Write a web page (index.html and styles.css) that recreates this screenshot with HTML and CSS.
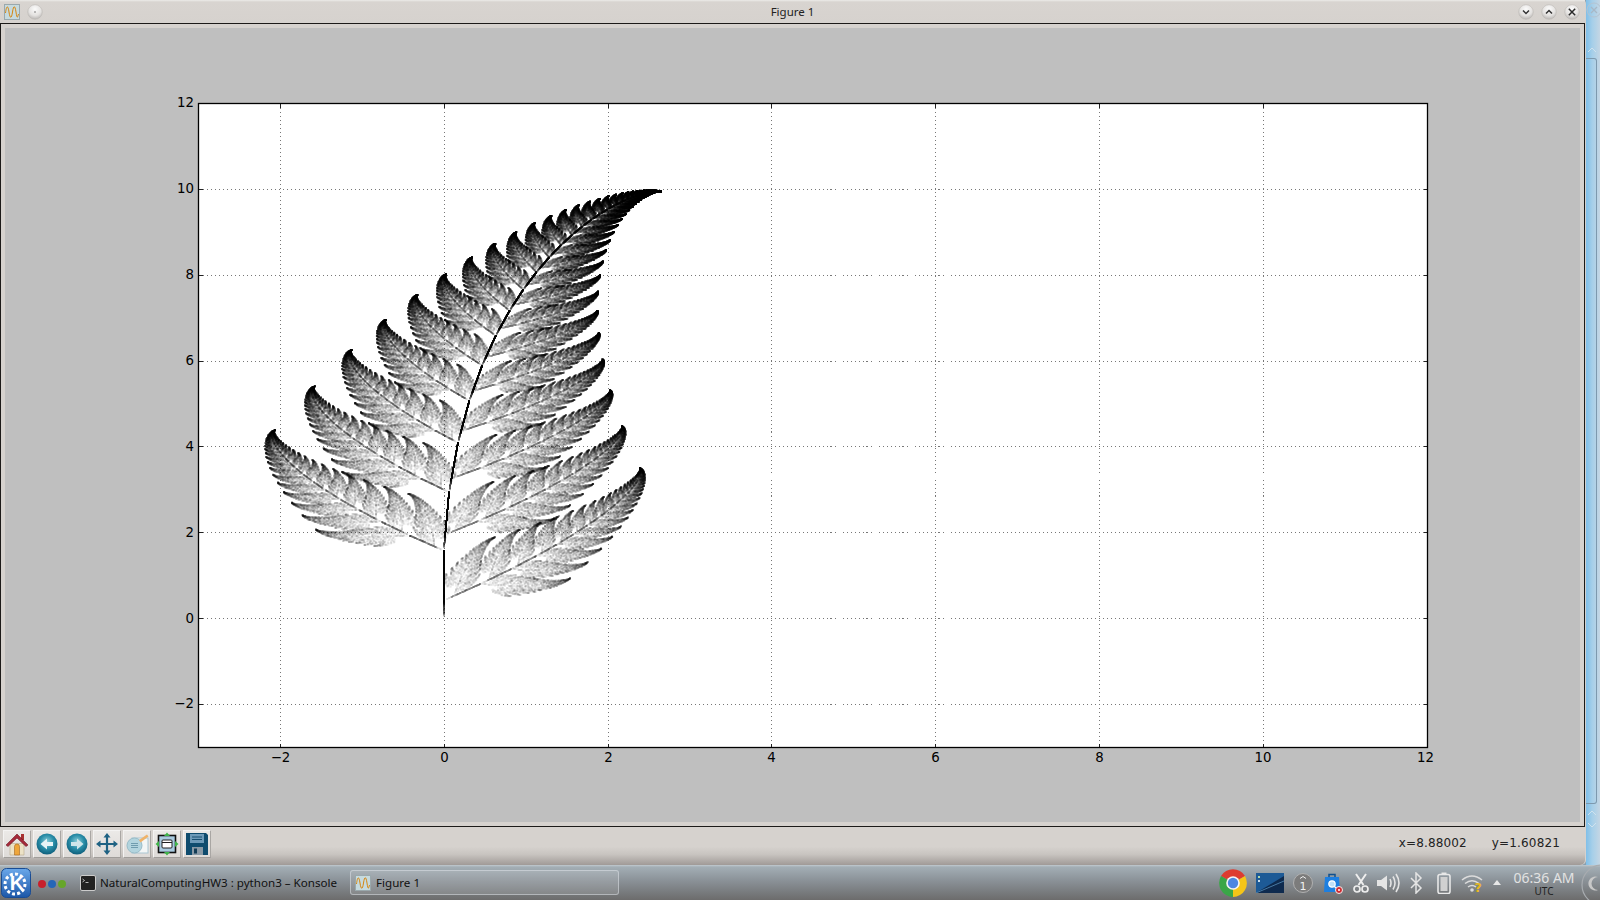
FILE: index.html
```html
<!DOCTYPE html>
<html lang="en">
<head>
<meta charset="utf-8">
<title>Figure 1</title>
<link rel="stylesheet" href="styles.css">
</head>
<body>
<svg class="defs" width="0" height="0" aria-hidden="true">
  <defs>
    <symbol id="figicon" viewBox="0 0 16 16">
      <rect x=".5" y=".5" width="15" height="15" fill="#c6dade" stroke="#9aa8ac"/>
      <path d="M1.5 9C2.500 1 4 1 5 8s2.500 7 3.500 0 2.500-7 3.500 0 1.500 6 2.500 2" fill="none" stroke="#d6860f" stroke-width="1"/>
    </symbol>
    <radialGradient id="knob" cx=".5" cy=".3" r=".8">
      <stop offset="0" stop-color="#fbfbfb"/><stop offset=".55" stop-color="#e4e2e0"/><stop offset="1" stop-color="#a9a6a4"/>
    </radialGradient>
    <radialGradient id="ball" cx=".5" cy=".4" r=".6">
      <stop offset="0" stop-color="#8fd2dc"/><stop offset=".55" stop-color="#2a8ea8"/><stop offset="1" stop-color="#0f5f7c"/>
    </radialGradient>
    <linearGradient id="kblue" x1="0" y1="0" x2="0" y2="1">
      <stop offset="0" stop-color="#6aa8ea"/><stop offset="1" stop-color="#1c57a8"/>
    </linearGradient>
  </defs>
</svg>
<div class="desktop">
  <div class="window">
    <header class="titlebar">
      <div class="title-left">
        <svg class="ico16"><use href="#figicon"/></svg>
        <svg class="knob" viewBox="0 0 16 16"><circle cx="8" cy="8" r="7.300" fill="url(#knob)" stroke="#bcb9b6" stroke-width=".6"/><circle cx="8" cy="8" r=".7" fill="#555"/></svg>
      </div>
      <div class="title-text">Figure 1</div>
      <div class="title-right">
        <svg class="knob" viewBox="0 0 16 16"><circle cx="8" cy="8" r="7.300" fill="url(#knob)" stroke="#bcb9b6" stroke-width=".6"/><path d="M5 6.500l3 3 3-3" fill="none" stroke="#333" stroke-width="1.500"/></svg>
        <svg class="knob" viewBox="0 0 16 16"><circle cx="8" cy="8" r="7.300" fill="url(#knob)" stroke="#bcb9b6" stroke-width=".6"/><path d="M5 9.500l3-3 3 3" fill="none" stroke="#333" stroke-width="1.500"/></svg>
        <svg class="knob" viewBox="0 0 16 16"><circle cx="8" cy="8" r="7.300" fill="url(#knob)" stroke="#bcb9b6" stroke-width=".6"/><path d="M4.800 4.800l6.400 6.400M11.200 4.800l-6.400 6.400" fill="none" stroke="#2a2a2a" stroke-width="1.500"/></svg>
      </div>
    </header>
    <main class="frame">
      <div class="figure">
        <svg class="chart" viewBox="5 28 1575 794" font-family="'DejaVu Sans', sans-serif" font-size="13.33" fill="#000">
          <rect x="198.500" y="103.500" width="1229" height="644" fill="#fff"/>
          <g class="grid">
            <path d="M280.500 103.500V747.500M444.500 103.500V747.500M608.500 103.500V747.500M771.500 103.500V747.500M935.500 103.500V747.500M1099.500 103.500V747.500M1263.500 103.500V747.500"/>
            <path d="M198.500 189.500H1427.500M198.500 275.500H1427.500M198.500 361.500H1427.500M198.500 446.500H1427.500M198.500 532.500H1427.500M198.500 618.500H1427.500M198.500 704.500H1427.500"/>
          </g>
          <path class="ticks" d="M280.500 103.500v4M444.500 103.500v4M608.500 103.500v4M771.500 103.500v4M935.500 103.500v4M1099.500 103.500v4M1263.500 103.500v4M280.500 747.500v-4M444.500 747.500v-4M608.500 747.500v-4M771.500 747.500v-4M935.500 747.500v-4M1099.500 747.500v-4M1263.500 747.500v-4M198.500 189.500h4M198.500 275.500h4M198.500 361.500h4M198.500 446.500h4M198.500 532.500h4M198.500 618.500h4M198.500 704.500h4M1427.500 189.500h-4M1427.500 275.500h-4M1427.500 361.500h-4M1427.500 446.500h-4M1427.500 532.500h-4M1427.500 618.500h-4M1427.500 704.500h-4"/>
          <rect class="spine" x="198.500" y="103.500" width="1229" height="644"/>
          <g text-anchor="end">
            <text x="194" y="107">12</text>
            <text x="194" y="193">10</text>
            <text x="194" y="279">8</text>
            <text x="194" y="365">6</text>
            <text x="194" y="450.500">4</text>
            <text x="194" y="536.500">2</text>
            <text x="194" y="622.500">0</text>
            <text x="194" y="708">−2</text>
          </g>
          <g text-anchor="middle">
            <text x="280.500" y="762">−2</text>
            <text x="444.500" y="762">0</text>
            <text x="608.500" y="762">2</text>
            <text x="771.500" y="762">4</text>
            <text x="935.500" y="762">6</text>
            <text x="1099.500" y="762">8</text>
            <text x="1263" y="762">10</text>
            <text x="1425.500" y="762">12</text>
          </g>
        </svg>
        <canvas id="fern" class="fern" width="1229" height="644"></canvas>
      </div>
    </main>
    <footer class="toolbar">
      <div class="tools">
        <button class="tool" type="button" aria-label="Home"><svg viewBox="0 0 24 24"><path d="M5 11.500h14V23H5z" fill="#ece2c6" stroke="#b9a98a" stroke-width=".6"/><path d="M9.500 14.500a2.500 2.500 0 0 1 5 0V23h-5z" fill="#eea63a" stroke="#a5661c" stroke-width=".6"/><rect x="16" y="2" width="3" height="6" fill="#a83232"/><path d="M1 13 12 2l11 11-2 1.500L12 6l-9 8.500z" fill="#a52a3a" stroke="#701a26" stroke-width=".6"/></svg></button>
        <button class="tool" type="button" aria-label="Back"><svg viewBox="0 0 24 24"><circle cx="12" cy="12" r="10.500" fill="url(#ball)"/><path d="M5.500 12 12 6.500V10h6v4h-6v3.500z" fill="#e8f4f6"/></svg></button>
        <button class="tool" type="button" aria-label="Forward"><svg viewBox="0 0 24 24"><circle cx="12" cy="12" r="10.500" fill="url(#ball)"/><path d="M18.500 12 12 6.500V10H6v4h6v3.500z" fill="#cfe6ea"/></svg></button>
        <button class="tool" type="button" aria-label="Pan"><svg viewBox="0 0 24 24"><path d="M12 1l3.500 4.500h-2.400v5.400h5.400V8.500L23 12l-4.500 3.500v-2.400h-5.400v5.400h2.400L12 23l-3.500-4.500h2.400v-5.400H5.500v2.400L1 12l4.500-3.500v2.400h5.400V5.500H8.500z" fill="#1f6283"/></svg></button>
        <button class="tool" type="button" aria-label="Zoom"><svg viewBox="0 0 24 24"><rect x="7" y="6" width="16" height="15" fill="#f3f6f6" stroke="#a9c6d2"/><circle cx="9.500" cy="13.500" r="7.500" fill="#b2d4de" stroke="#98bcc8"/><path d="M6 11.500h7M6 13.500h7M6 15.500h7" stroke="#6f9cae" stroke-width="1"/><path d="M14 8 22 2.500l1.500 2-8 6z" fill="#efb36a"/></svg></button>
        <button class="tool" type="button" aria-label="Subplots"><svg viewBox="0 0 24 24"><rect x="3.500" y="3.500" width="17" height="17" fill="#a9cbe0" stroke="#111" stroke-width="1.600"/><rect x="7" y="8" width="10" height="8" rx="1" fill="#fff" stroke="#222"/><path d="M7 10.500h10" stroke="#222"/><path d="M12 .5l3 3.500H9zM12 23.500 9 20h6zM.5 12 4 9v6zM23.500 12 20 9v6z" fill="#3fb54a"/></svg></button>
        <button class="tool" type="button" aria-label="Save"><svg viewBox="0 0 24 24"><path d="M1 1h20l2 2v20H1z" fill="#0f4c6e"/><rect x="5" y="2" width="14" height="9" fill="#6d9ab8"/><path d="M7 5h10M7 7.500h10" stroke="#184f70" stroke-width="1.200"/><rect x="7" y="15" width="11" height="8" fill="#8a9aa6"/><rect x="9" y="16.500" width="3" height="5" fill="#123c56"/></svg></button>
      </div>
      <div class="coords"><span>x=8.88002</span><span>y=1.60821</span></div>
    </footer>
  </div>
  <aside class="behind">
    <svg class="behind-x" viewBox="0 0 16 16"><circle cx="8" cy="8" r="7" fill="none" stroke="#b4c4d2"/><path d="M5 5l6 6M11 5l-6 6" stroke="#a8b8c6" stroke-width="1.300"/></svg>
    <svg class="chev chev-top" viewBox="0 0 10 6"><path d="M1 5l4-4 4 4" fill="none" stroke="#cfe2ee" stroke-width="1"/></svg>
    <div class="slider"></div>
    <svg class="chev chev-a" viewBox="0 0 10 6"><path d="M1 5l4-4 4 4" fill="none" stroke="#cfe2ee" stroke-width="1"/></svg>
    <svg class="chev chev-b" viewBox="0 0 10 6"><path d="M1 1l4 4 4-4" fill="none" stroke="#cfe2ee" stroke-width="1"/></svg>
  </aside>
</div>
<nav class="panel">
  <svg class="kmenu" viewBox="0 0 30 30"><rect x=".5" y=".5" width="29" height="29" rx="5" fill="url(#kblue)" stroke="#1a4d94"/><circle cx="14" cy="16" r="10" fill="none" stroke="#fff" stroke-width="3" stroke-dasharray="3 2.200"/><text x="16" y="22" font-family="'Liberation Sans', sans-serif" font-weight="700" font-size="20" fill="#fff" text-anchor="middle">K</text></svg>
  <svg class="dots" viewBox="0 0 30 10"><circle cx="5" cy="5" r="4" fill="#c8202c"/><circle cx="15" cy="5" r="4" fill="#2566b8"/><circle cx="25" cy="5" r="4" fill="#66a62a"/></svg>
  <div class="task task-konsole">
    <svg class="ico16" viewBox="0 0 16 16"><rect x=".5" y=".5" width="15" height="15" rx="1.500" fill="#222" stroke="#ccc"/><path d="M2.500 4l2 1.500-2 1.500M5.500 7.500h3" stroke="#ddd" fill="none" stroke-width=".8"/></svg>
    <span>NaturalComputingHW3 : python3 – Konsole</span>
  </div>
  <div class="task task-figure">
    <svg class="ico16"><use href="#figicon"/></svg>
    <span>Figure 1</span>
  </div>
  <div class="tray">
    <svg class="t-chrome" viewBox="0 0 28 28"><path d="M14 14 2 7a14 14 0 0 1 24 0z" fill="#dd3b30"/><path d="M14 14 26 7a14 14 0 0 1-12 21z" fill="#f5c518"/><path d="M14 14 14 28A14 14 0 0 1 2 7z" fill="#3aa648"/><circle cx="14" cy="14" r="6.800" fill="#f4f4f4"/><circle cx="14" cy="14" r="5.200" fill="#4c86e0"/></svg>
    <svg class="t-desk" viewBox="0 0 28 20"><rect width="28" height="20" fill="#1d5a96"/><path d="M0 20 28 3v17z" fill="#0e2a4e"/><path d="M0 20 28 8" stroke="#6fb0de" stroke-width=".6"/><rect x="2" y="3" width="2" height="2" fill="#b5d8a8"/><rect x="2" y="7" width="2" height="2" fill="#c8dcec"/></svg>
    <svg class="t-one" viewBox="0 0 20 20"><circle cx="10" cy="10" r="9.500" fill="#7c7c7c" stroke="#b0b0b0"/><path d="M7 5.500 10 3.500l3 2" fill="none" stroke="#eee"/><text x="10" y="16.500" font-family="'DejaVu Sans', sans-serif" font-size="11" fill="#f0f0f0" text-anchor="middle">1</text></svg>
    <svg class="t-bag" viewBox="0 0 20 22"><path d="M2 5h14l1 15H1z" fill="#1e7fe0"/><path d="M6 5V2.500h6V5" fill="none" stroke="#10508e" stroke-width="1.500"/><circle cx="9" cy="12" r="3.200" fill="#bfe0f8" stroke="#fff" stroke-width="1.200"/><path d="M11.500 14.500l2 2" stroke="#fff" stroke-width="1.300"/><circle cx="16" cy="18" r="3.500" fill="#d02a30" stroke="#eee"/><circle cx="16" cy="18" r="1" fill="#fff"/></svg>
    <svg class="t-cut" viewBox="0 0 16 20"><path d="M3 1l7.500 11M13 1 5.500 12" stroke="#eee" stroke-width="2"/><circle cx="4" cy="16" r="3" fill="none" stroke="#eee" stroke-width="1.700"/><circle cx="12" cy="16" r="3" fill="none" stroke="#eee" stroke-width="1.700"/></svg>
    <svg class="t-vol" viewBox="0 0 24 20"><path d="M1 7h4l6-4.500v15L5 13H1z" fill="#e4e4e4"/><path d="M14 6q2 4 0 8M17 3.500q4 6.500 0 13M20 1q6 9 0 18" fill="none" stroke="#e4e4e4" stroke-width="1.600"/></svg>
    <svg class="t-bt" viewBox="0 0 14 22"><path d="M2 6l10 10-5 5V1l5 5L2 16" fill="none" stroke="#e4e4e4" stroke-width="1.500"/></svg>
    <svg class="t-bat" viewBox="0 0 14 22"><rect x="1" y="2.500" width="12" height="19" rx="2" fill="none" stroke="#e8e8e8" stroke-width="1.600"/><rect x="4.500" y=".5" width="5" height="2" fill="#e8e8e8"/><rect x="3.500" y="5" width="7" height="14" fill="#d0d0d0"/></svg>
    <svg class="t-wifi" viewBox="0 0 22 20"><path d="M1 7q10-8 20 0M4 10.500q7-5.500 14 0M7 14q4-3 8 0" fill="none" stroke="#dcdcdc" stroke-width="1.500"/><circle cx="11" cy="17" r="1.800" fill="#dcdcdc"/><text x="17" y="19" font-family="'DejaVu Sans', sans-serif" font-weight="700" font-size="13" fill="#e8b820" text-anchor="middle">?</text></svg>
    <svg class="t-up" viewBox="0 0 8 5"><path d="M0 5 4 0l4 5z" fill="#e8e8e8"/></svg>
    <div class="clock"><div class="time">06:36 AM</div><div class="zone">UTC</div></div>
  </div>
  <svg class="cashew" viewBox="0 0 20 44"><circle cx="22" cy="22" r="20" fill="none" stroke="#a8acb0" stroke-width="1.200"/><path d="M18 14a7 7 0 1 0 0 13 6 6 0 0 1 0-13z" fill="#c8c8c8"/></svg>
</nav>
<script src="fern.js"></script>
</body>
</html>
```

FILE: styles.css
```css
* { box-sizing: border-box; }
html, body { margin: 0; height: 100%; }
body {
  width: 1600px;
  height: 900px;
  overflow: hidden;
  display: flex;
  flex-direction: column;
  background: #8ba0ae;
  font-family: "DejaVu Sans", sans-serif;
}
.defs { position: absolute; }
.desktop { display: flex; height: 865px; }

/* window */
.window {
  width: 1586px;
  display: flex;
  flex-direction: column;
  background: #d6d2ce;
  border-radius: 0 4px 5px 0;
  padding-right: 1px;
}
.titlebar {
  height: 23px;
  display: grid;
  grid-template-columns: 1fr auto 1fr;
  align-items: center;
  background: linear-gradient(#ecebe9 0, #d8d4d0 2px, #d6d2ce 100%);
}
.title-left { display: flex; align-items: center; gap: 7px; padding-left: 4px; }
.title-right { display: flex; align-items: center; justify-content: flex-end; gap: 7px; padding-right: 5px; }
.title-text { font: 11.5px "Noto Sans", sans-serif; color: #222; }
.ico16 { width: 16px; height: 16px; flex: none; display: block; }
.knob { width: 16px; height: 16px; display: block; }

.frame {
  height: 804px;
  border: 1px solid #1c1a18;
  padding: 4px;
  background: #d6d2ce;
}
.figure { position: relative; width: 1575px; height: 794px; background: #bfbfbf; }
.chart { display: block; width: 1575px; height: 794px; }
.grid path { fill: none; stroke: #777; stroke-width: 1; stroke-dasharray: 1 3; shape-rendering: crispEdges; }
.ticks { fill: none; stroke: #222; stroke-width: 1; shape-rendering: crispEdges; }
.spine { fill: none; stroke: #000; stroke-width: 1.300; }
.fern { position: absolute; left: 193.500px; top: 75.500px; }

/* toolbar */
.toolbar {
  height: 38px;
  display: flex;
  justify-content: space-between;
  padding: 3px 0 0 3px;
  background: linear-gradient(#d6d2ce 0, #d6d2ce 52%, #c8c4c0 72%, #a09a97 100%);
  border-bottom-right-radius: 5px;
}
.tools { display: flex; gap: 2px; align-items: flex-start; }
.tool {
  width: 28px;
  height: 28px;
  padding: 1px;
  display: flex;
  align-items: center;
  justify-content: center;
  background: linear-gradient(#ebe9e7, #dedbd8);
  border: 1px solid;
  border-color: #f4f3f2 #a9a6a3 #a09d9a #f4f3f2;
}
.tool svg { width: 24px; height: 24px; display: block; }
.coords {
  display: flex;
  gap: 25px;
  padding: 6px 25px 0 0;
  font-size: 12px;
  letter-spacing: .15px;
  color: #222;
}

/* strip of the window behind */
.behind {
  position: relative;
  flex: 1;
  background: linear-gradient(90deg, #80bfe8 0, #a6cfe9 45%, #c4d6e4 100%);
}
.behind-x { position: absolute; left: 0; top: 2px; width: 16px; height: 16px; }
.chev { position: absolute; left: 1px; width: 10px; height: 6px; }
.chev-top { top: 47px; }
.chev-a { top: 810px; }
.chev-b { top: 822px; }
.slider {
  position: absolute;
  left: 0;
  top: 58px;
  width: 11px;
  height: 746px;
  border: 1.500px solid #7d99ae;
  border-left: 0;
  border-radius: 0 3px 3px 0;
}

/* panel */
.panel {
  position: relative;
  height: 35px;
  display: flex;
  align-items: center;
  background: linear-gradient(#c2cad0 0, #a3aeb5 2px, #8a9197 45%, #6c6c6c 100%);
  color: #111;
  font: 11.6px "Noto Sans", sans-serif;
}
.kmenu { width: 30px; height: 30px; margin-left: 1px; flex: none; }
.dots { width: 30px; height: 10px; margin-left: 6px; margin-top: 2px; flex: none; }
.task { display: flex; align-items: center; gap: 4px; height: 25px; white-space: nowrap; }
.task-konsole { width: 270px; margin-left: 13px; }
.task-figure {
  width: 269px;
  gap: 5px;
  padding-left: 4px;
  background: rgba(255, 255, 255, .12);
  border: 1px solid rgba(225, 230, 235, .5);
  border-radius: 3px;
}
.tray { display: flex; align-items: center; margin-left: auto; padding-right: 25px; }
.tray > svg { display: block; flex: none; }
.t-chrome { width: 28px; height: 28px; }
.t-desk { width: 28px; height: 20px; margin-left: 9px; }
.t-one { width: 20px; height: 20px; margin-left: 9px; }
.t-bag { width: 20px; height: 22px; margin-left: 10px; }
.t-cut { width: 16px; height: 20px; margin-left: 10px; }
.t-vol { width: 24px; height: 20px; margin-left: 7px; }
.t-bt { width: 14px; height: 22px; margin-left: 9px; }
.t-bat { width: 14px; height: 22px; margin-left: 14px; }
.t-wifi { width: 22px; height: 20px; margin-left: 10px; }
.t-up { width: 8px; height: 5px; margin-left: 10px; }
.clock { margin-left: 12px; width: 62px; text-align: center; color: #e2e2e2; }
.time { font-size: 14px; line-height: 17px; }
.zone { font-size: 10px; line-height: 11px; color: #222; }
.cashew { position: absolute; right: 0; top: -2px; width: 20px; height: 44px; }
```

FILE: fern.js
```js
(function () {
  var canvas = document.getElementById("fern");
  var w = canvas.width, h = canvas.height;
  var ctx = canvas.getContext("2d");
  var X0 = 442.8 - 198.5, SX = 81.9;
  var Y0 = 618.3 - 103.5, SY = 42.93;
  var N = 500000;
  var ALPHA = 0.03;
  var keep = new Float32Array(w * h).fill(1);

  var seed = 20140306;
  function rand() {
    seed |= 0; seed = seed + 0x6D2B79F5 | 0;
    var t = Math.imul(seed ^ seed >>> 15, 1 | seed);
    t = t + Math.imul(t ^ t >>> 7, 61 | t) ^ t;
    return ((t ^ t >>> 14) >>> 0) / 4294967296;
  }

  var x = 0, y = 0;
  for (var i = 0; i < N; i++) {
    var r = rand(), nx, ny;
    if (r < 0.01) { nx = 0; ny = 0.16 * y; }
    else if (r < 0.86) { nx = 0.85 * x + 0.04 * y; ny = -0.04 * x + 0.85 * y + 1.6; }
    else if (r < 0.93) { nx = 0.2 * x - 0.26 * y; ny = 0.23 * x + 0.22 * y + 1.6; }
    else { nx = -0.15 * x + 0.28 * y; ny = 0.26 * x + 0.24 * y + 0.44; }
    x = nx; y = ny;
    var ix = Math.round(X0 + SX * x - 0.5), iy = Math.round(Y0 - SY * y - 0.5);
    for (var a = 0; a < 2; a++) {
      for (var b = 0; b < 2; b++) {
        var qx = ix + a, qy = iy + b;
        if (qx >= 0 && qy >= 0 && qx < w && qy < h) keep[qy * w + qx] *= 1 - ALPHA;
      }
    }
  }

  var img = ctx.createImageData(w, h);
  for (var p = 0; p < w * h; p++) {
    img.data[p * 4 + 3] = Math.round((1 - keep[p]) * 255);
  }
  ctx.putImageData(img, 0, 0);
})();
```
